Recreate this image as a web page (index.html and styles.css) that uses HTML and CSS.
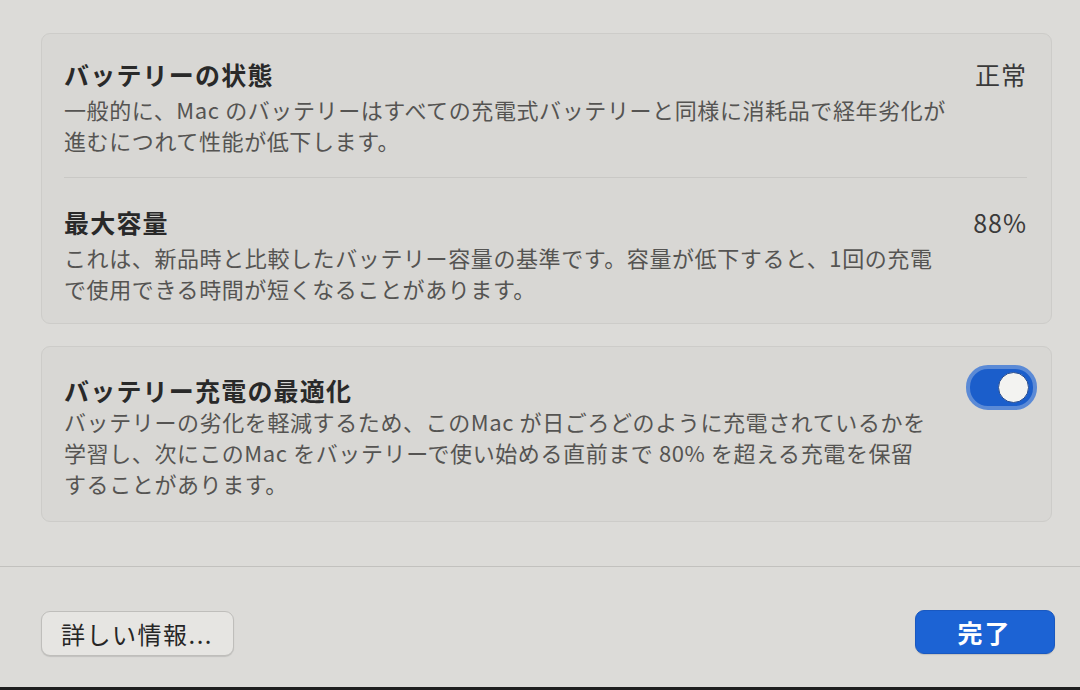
FILE: index.html
```html
<!DOCTYPE html>
<html lang="ja">
<head>
    <meta charset="UTF-8">
    <meta name="viewport" content="width=device-width, initial-scale=1.0">
    <title>バッテリーの状態</title>
    <link rel="stylesheet" href="styles.css">
</head>
<body>
    <div class="sheet">
        <main class="content">
            <section class="group">
                <div class="row">
                    <div class="row-text">
                        <h2 class="row-title">バッテリーの状態</h2>
                        <p class="row-desc">一般的に、Mac のバッテリーはすべての充電式バッテリーと同様に消耗品で経年劣化が<br>進むにつれて性能が低下します。</p>
                    </div>
                    <span class="row-value">正常</span>
                </div>
                <div class="row">
                    <div class="row-text">
                        <h2 class="row-title">最大容量</h2>
                        <p class="row-desc">これは、新品時と比較したバッテリー容量の基準です。容量が低下すると、1回の充電<br>で使用できる時間が短くなることがあります。</p>
                    </div>
                    <span class="row-value">88%</span>
                </div>
            </section>

            <section class="group">
                <div class="row row-toggle">
                    <div class="row-text">
                        <h2 class="row-title">バッテリー充電の最適化</h2>
                        <p class="row-desc">バッテリーの劣化を軽減するため、このMac が日ごろどのように充電されているかを<br>学習し、次にこのMac をバッテリーで使い始める直前まで 80% を超える充電を保留<br>することがあります。</p>
                    </div>
                    <span class="switch on" role="switch" aria-checked="true"><span class="knob"></span></span>
                </div>
            </section>
        </main>

        <footer class="actions">
            <button class="btn">詳しい情報...</button>
            <button class="btn btn-primary">完了</button>
        </footer>
    </div>
    <div class="screen-edge"></div>
</body>
</html>
```

FILE: styles.css
```css
html, body {
    margin: 0;
    padding: 0;
    height: 100%;
}

body {
    font-family: "Noto Sans CJK JP", "Noto Sans", sans-serif;
    background-color: #dcdbd8;
    color: #2b2b2b;
    display: flex;
    flex-direction: column;
    overflow: hidden;
}

.sheet {
    flex: 1;
    display: flex;
    flex-direction: column;
}

.content {
    padding: 33px 28px 44px 41px;
    display: flex;
    flex-direction: column;
    gap: 22px;
    border-bottom: 1px solid #c2c1be;
}

.group {
    background-color: #d8d7d4;
    border: 1px solid #cdccc9;
    border-radius: 9px;
    padding: 0 24px 0 22px;
}

.row {
    display: flex;
    justify-content: space-between;
    align-items: flex-start;
    padding: 24px 0 21px;
}

.row + .row {
    border-top: 1px solid #c9c8c5;
    padding: 28px 0 19px;
}

.row-title {
    margin: 0;
    font-size: 25px;
    font-weight: 700;
    line-height: 32px;
    letter-spacing: 1.2px;
    color: #292929;
}

.row-desc {
    margin: 4px 0 0;
    font-size: 22px;
    line-height: 31px;
    letter-spacing: 0.6px;
    color: #555452;
}

.row-value {
    font-size: 25px;
    line-height: 32px;
    letter-spacing: 1px;
    color: #3a3a3a;
}

.row-toggle {
    padding: 18px 0 22px;
    margin-right: -10px;
}

.row-toggle .row-title {
    margin-top: 9px;
}

.row-toggle .row-desc {
    margin-top: 0;
}

/* switch */
.switch {
    position: relative;
    flex: none;
    width: 63px;
    height: 37px;
    border-radius: 22px;
    background-color: #1b5ecb;
    border: 4px solid #5b8ad6;
}

.switch .knob {
    position: absolute;
    top: 3px;
    right: 4px;
    width: 29px;
    height: 29px;
    border-radius: 50%;
    background-color: #f3f3f1;
    border: 1px solid #2c4f8f;
}

.actions {
    display: flex;
    justify-content: space-between;
    align-items: center;
    padding: 44px 25px 0 41px;
}

.btn {
    font-family: inherit;
    font-size: 24px;
    letter-spacing: 1.5px;
    color: #262626;
    background-color: #e6e5e2;
    border: 1px solid #bfbebb;
    border-radius: 9px;
    height: 45px;
    padding: 0 20px 0 19px;
    box-shadow: 0 1px 1px rgba(0, 0, 0, 0.12);
}

.btn-primary {
    width: 140px;
    height: 44px;
    margin-top: -4px;
    font-size: 25px;
    letter-spacing: 2px;
    color: #fff;
    font-weight: 700;
    background-color: #1c63d4;
    border-color: #1958c0;
}

.screen-edge {
    height: 3px;
    background-color: #1e1e1e;
}
```
